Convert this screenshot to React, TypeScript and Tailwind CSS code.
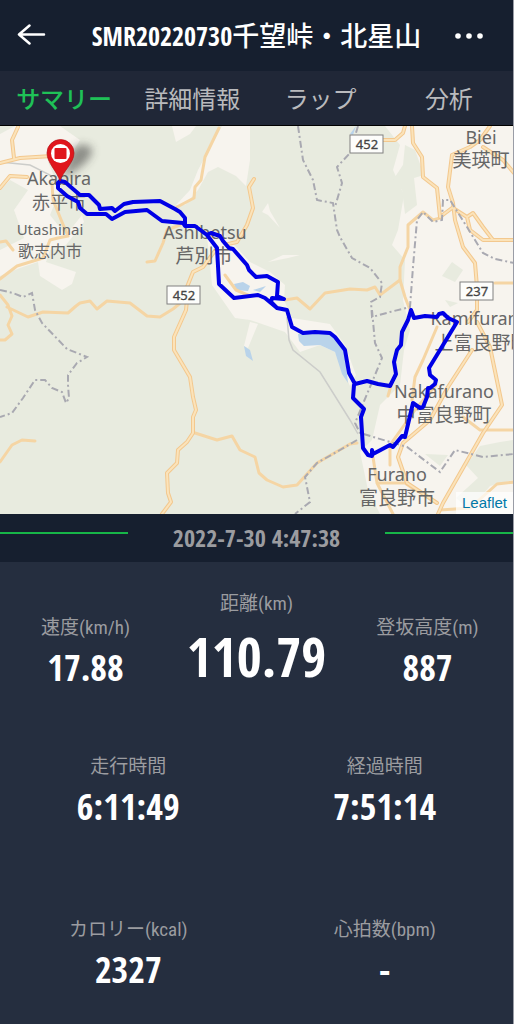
import React, { useState } from "react";

const tabs = ["サマリー", "詳細情報", "ラップ", "分析"];

// main roads, drawn with a casing and a lighter core
const mainRoads = [
  "M14 158L12 140L18 127M0 163L20 158L52 156M0 188L10 176L27 177",
  "M217 248L203 267L193 272L187 287L187 300L186 310L174 337V350L190 377L193 397L196 410L193 417V433L187 442L178 450L177 463L167 473L168 493L171 502L162 514",
  "M412 126L413 143L422 157L423 177L437 188L440 217L452 208",
  "M490 126L480 140L470 147L452 155L448 187L453 203L455 220L463 247L475 263L477 287V310L468 322",
  "M453 208L467 217L473 213L483 227L493 240L514 240M467 217L470 230L483 240H493",
  "M483 147L503 160L514 173M383 140L395 140L403 133L405 126",
  "M472 350L448 387L430 420L403 443L398 457L407 483L437 503M477 322L490 347L502 405L483 433L443 503L438 514",
  "M254 179L249 187L253 208L247 225L237 242L228 244",
];

const smallRoads = [
  "M52 183L53 200L62 222L68 236L58 238L50 240L43 258L17 266L0 279M0 242L6 241L13 250",
  "M0 295L8 305L12 316L8 325L12 334L5 340H0M7 307L28 317L43 312L68 313L76 306L80 303L90 301L97 309L107 301L130 303L147 316L160 317L173 309L184 300",
  "M147 262L155 261L163 243L167 230L180 225",
  "M219 128L205 157L201 180L195 187L194 198L177 207",
  "M195 433L217 440L232 436L240 450L255 457L259 473L267 480L283 487L297 485L317 463L350 444L357 443",
  "M285 300L297 298L310 309L325 293L350 289L367 290L375 287L380 295L400 280L400 267L408 247V225L423 212L433 220L440 218",
  "M400 280L405 297L410 310M495 283H514",
  "M437 327L423 360L415 377L412 400M392 382L388 396M463 417L480 430H514",
  "M373 457L377 483L393 514M378 483H405L415 490M440 510L470 508L497 484L514 482",
  "M0 462L12 445L22 440L35 441M225 275L236 290L250 296",
  "M390 465V445L415 410L436 385",
];

const borders = [
  "M0 290L13 293L23 297L32 293L35 310L42 323L67 349L87 357L77 363L68 375V385L69 398L66 403L62 392L52 388L45 380H35L23 398L12 413L0 417",
  "M298 126L303 160L313 180L317 200L333 203L337 230L340 237L352 258L370 268L382 283L380 297L371 302L372 317L390 312L410 307L413 267L417 220L423 212L433 222L442 220L443 200L450 200L467 227L483 253L495 259L514 263",
  "M358 126L350 153L337 167L342 183L335 207",
  "M372 310L375 343L382 358L370 387L355 423L360 433L407 447L440 472L455 450L483 457L514 454",
  "M357 440L340 450L317 463L305 477L310 502L295 514",
];

const track =
  "M60 181L65 182L80 195H89L99 205L100 209L112 208L115 211L124 204L133 202L160 201L175 209L180 212L185 218V225" +
  "M60 181L58 183V188L67 196L78 202L80 208L87 214H106L112 219L125 212L147 210L162 221L183 223L185 226L195 226L207 235L217 248L219 284L234 298L258 295L265 298L277 308L287 310L292 327L303 333L315 332L330 333L335 337L345 350L349 373L355 384" +
  "M207 235L211 233L220 236L223 241L229 248L233 249L247 265L249 270L256 277L267 276L278 282L277 296L284 299L272 298L271 302L277 308" +
  "M355 384L367 381L378 384L390 386L396 374L394 362L397 350L401 345L402 332L408 320L411 310L414 318L425 316L437 317L439 314L443 313L448 318L457 322L440 350L429 368L430 375L436 380L435 384L430 388L428 388L427 397L423 407L420 408L413 403L405 437L402 436L393 447L390 445L373 454L372 450L372 456L368 455L363 448L361 417L364 409L353 398L354 385";

const places = [
  { x: 59, y: 185, size: 18, text: "Akabira" },
  { x: 59, y: 209, size: 18, text: "赤平市" },
  { x: 50, y: 235, size: 15, text: "Utashinai" },
  { x: 50, y: 257, size: 16, text: "歌志内市" },
  { x: 205, y: 239, size: 18, text: "Ashibetsu" },
  { x: 204, y: 263, size: 19, text: "芦別市" },
  { x: 481, y: 144, size: 18, text: "Biei" },
  { x: 481, y: 167, size: 19, text: "美瑛町" },
  { x: 480, y: 325, size: 18, text: "Kamifurano" },
  { x: 482, y: 350, size: 19, text: "上富良野町" },
  { x: 444, y: 398, size: 18, text: "Nakafurano" },
  { x: 444, y: 422, size: 19, text: "中富良野町" },
  { x: 397, y: 481, size: 18, text: "Furano" },
  { x: 397, y: 505, size: 19, text: "富良野市" },
];

const shields = [
  { x: 184, y: 295, text: "452" },
  { x: 367, y: 144, text: "452" },
  { x: 477, y: 291, text: "237" },
];

const RouteMap = () => (
  <div className="relative">
    <svg
      viewBox="0 126 513 388"
      className="block w-full bg-[#e8ebdf] font-['Noto_Sans','Noto_Sans_CJK_JP',sans-serif]"
      role="img"
      aria-label="ルートマップ"
    >
      <defs>
        <filter id="soft" x="-50%" y="-50%" width="200%" height="200%">
          <feGaussianBlur stdDeviation="4" />
        </filter>
      </defs>

      {/* open land */}
      <g fill="#f7f4ee">
        <path d="M385 126L400 145L393 170L404 195L398 230L392 245L405 260L403 300L410 330L404 350L400 385L380 405L372 440L360 452L368 490L380 514H514V126Z" />
        <path d="M0 134L15 126H60L80 140L68 160L48 162L60 190L50 215L66 235L82 215L84 222L66 245L50 250L46 262L76 272L72 284L62 290L40 276L38 262L20 268L0 276V250L24 238L14 210L28 190L10 180L0 190Z" />
        <path d="M172 126H196L190 134L176 142ZM222 126H250L250 160L246 186L236 176L218 167L208 172L198 190L185 205L176 205L190 190L198 170L206 155Z" />
        <path d="M207 236L222 232L250 262L270 272L285 285L284 300L292 318L330 324L345 345L356 375L350 386L335 352L320 345L300 352L285 332L250 320L235 318L212 285Z" />
        <path d="M250 322L258 324L248 348L244 346ZM283 255L300 255L288 258L268 262ZM262 212L268 203L270 211L280 228L268 215Z" />
      </g>
      <g fill="#e8ebdf">
        <path d="M405 145L415 150L424 175L414 178L417 205L405 214L402 190L393 180L403 165ZM452 262L463 270L455 282L442 276ZM445 300L458 303L450 307Z" />
        <path d="M480 446L500 442L513 440V480L490 486L470 510L456 498L478 478L466 465ZM425 454L448 455L440 466ZM385 344L400 352L396 372L388 382L372 384Z" />
      </g>
      <g fill="#b9d3ea">
        <path d="M298 334H332L344 350L348 383L342 374L335 352L320 345L304 346L299 341Z" />
        <path d="M234 284L243 282L250 286L248 291L236 290ZM253 290L266 286L260 292ZM244 346L250 350L253 361L246 356ZM356 126L353 135L350 134Z" />
      </g>

      <path d="M287 317L289 340L293 350L320 372L350 420L358 434" fill="none" stroke="#cccdca" strokeWidth="1.5" />
      <path d="M0 162L30 165L50 175L60 190" fill="none" stroke="#cccdca" strokeWidth="1.5" />

      <g fill="none" strokeLinejoin="round" strokeLinecap="round">
        {smallRoads.map((d) => (
          <path key={d} d={d} stroke="#f5d5a4" strokeWidth="3" />
        ))}
        {mainRoads.map((d) => (
          <path key={d} d={d} stroke="#f3c88e" strokeWidth="4" />
        ))}
        {mainRoads.map((d) => (
          <path key={d} d={d} stroke="#fbe3ba" strokeWidth="2" />
        ))}
      </g>
      <g fill="none" stroke="#a9a9b1" strokeWidth="2" strokeDasharray="7 3 2 3">
        {borders.map((d) => (
          <path key={d} d={d} />
        ))}
      </g>

      <g fill="#666666" textAnchor="middle">
        {places.map((p) => (
          <text key={p.text} x={p.x} y={p.y} fontSize={p.size}>
            {p.text}
          </text>
        ))}
      </g>
      {shields.map((s) => (
        <g key={`${s.x}-${s.text}`}>
          <rect x={s.x - 17} y={s.y - 9} width="33" height="18" fill="#fdfdfb" stroke="#808080" />
          <text x={s.x} y={s.y + 5} fontSize="13" textAnchor="middle" fill="#444444" stroke="#444444" strokeWidth="0.3">
            {s.text}
          </text>
        </g>
      ))}

      <path d={track} fill="none" stroke="#0000e6" strokeWidth="4" strokeLinejoin="round" strokeLinecap="round" />

      {/* end marker */}
      <path d="M62 178L72 150Q82 140 92 148Q94 162 62 178Z" fill="#333333" opacity="0.5" filter="url(#soft)" />
      <path d="M60 181C57 171 47 163 47 153A13.500 13.500 0 0 1 74 153C74 163 63 171 60 181Z" fill="#e0161c" stroke="#b51016" strokeWidth="0.7" />
      <circle cx="60.500" cy="153.500" r="9.500" fill="#ffffff" />
      <rect x="54.500" y="148" width="12" height="11" rx="1" fill="#e0161c" />
    </svg>
    <a
      href="#leaflet"
      className="absolute bottom-0 right-0 bg-white/70 px-1.5 font-['Liberation_Sans',sans-serif] text-[15px] leading-[22px] text-[#0078a8]"
    >
      Leaflet
    </a>
  </div>
);

interface StatProps {
  label: string;
  value: string;
  large?: boolean;
}

const Stat = ({ label, value, large }: StatProps) => (
  <div className="flex flex-col items-center gap-2">
    <dt className="whitespace-nowrap font-['Roboto_Condensed','Noto_Sans_CJK_JP',sans-serif] text-[19px] leading-6 text-[#9b9ca0]">
      {label}
    </dt>
    <dd
      className={`font-bold text-white ${
        large ? "text-[54px] leading-[64px]" : "text-[36px] leading-10"
      }`}
    >
      {value}
    </dd>
  </div>
);

const App = () => {
  const [active, setActive] = useState(tabs[0]);

  return (
    <main className="flex min-h-screen flex-col border-r border-[#9a9da6] bg-[#252e3f] font-['Open_Sans_Condensed','Noto_Sans_CJK_JP',sans-serif]">
      <header className="flex h-[71px] items-center justify-between bg-[#161f2f] px-4 text-white">
        <button type="button" aria-label="戻る" className="w-11">
          <svg viewBox="0 0 44 24" className="h-6 w-11" fill="none" stroke="currentColor" strokeWidth="2.500" strokeLinecap="round" strokeLinejoin="round">
            <path d="M28 10.500H3M13.500 1.500L3 10.500L13.500 19.500" />
          </svg>
        </button>
        <h1 className="whitespace-nowrap text-[26px] font-bold leading-9">
          SMR20220730<span className="text-[27px] font-medium">千望峠・北星山</span>
        </h1>
        <button type="button" aria-label="メニュー" className="w-11">
          <svg viewBox="0 0 44 24" className="h-6 w-11" fill="currentColor">
            <circle cx="5" cy="12" r="2.800" />
            <circle cx="16" cy="12" r="2.800" />
            <circle cx="27" cy="12" r="2.800" />
          </svg>
        </button>
      </header>

      <nav className="grid h-[55px] grid-cols-4 border-b border-black bg-[#202737] pt-0.5">
        {tabs.map((tab) => (
          <button
            key={tab}
            type="button"
            onClick={() => setActive(tab)}
            className={`whitespace-nowrap text-2xl ${
              active === tab ? "font-medium text-[#1fc157]" : "text-[#b9babd]"
            }`}
          >
            {tab}
          </button>
        ))}
      </nav>

      <RouteMap />

      <div className="grid h-12 grid-cols-4 bg-[#161f2f]">
        <span className="mt-[18px] h-0.5 bg-[#17b548]" />
        <time className="col-span-2 text-center text-2xl font-bold leading-[48px] text-[#9b9ca0]">
          2022-7-30 4:47:38
        </time>
        <span className="mt-[18px] h-0.5 bg-[#17b548]" />
      </div>

      <section className="pb-8 pt-[30px]">
        <dl className="grid grid-cols-3 items-end">
          <Stat label="速度(km/h)" value="17.88" />
          <Stat label="距離(km)" value="110.79" large />
          <Stat label="登坂高度(m)" value="887" />
        </dl>
        <dl className="mt-[67px] grid grid-cols-2 gap-y-[91px]">
          <Stat label="走行時間" value="6:11:49" />
          <Stat label="経過時間" value="7:51:14" />
          <Stat label="カロリー(kcal)" value="2327" />
          <Stat label="心拍数(bpm)" value="-" />
        </dl>
      </section>
    </main>
  );
};

export default App;
